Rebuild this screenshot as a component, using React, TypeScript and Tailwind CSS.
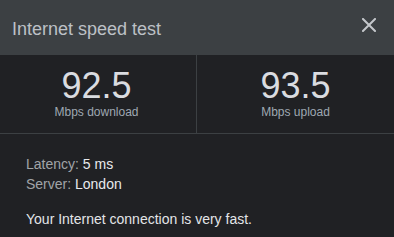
export default function App() {
  return (
    <div
      className="w-[394px] h-[237px] bg-[#202124] overflow-hidden"
      style={{ fontFamily: '"Liberation Sans", Arial, sans-serif' }}
    >
      <div className="h-[54px] bg-[#3c4043] flex items-start justify-between">
        <div className="pl-3 pt-[20px] text-[18px] leading-[18px] text-[#bdc1c6]">
          Internet speed test
        </div>
        <svg width="14" height="14" viewBox="0 0 14 14" className="mt-[18px] mr-[18px]">
          <path d="M1 1L13 13M13 1L1 13" stroke="#c4c7cb" strokeWidth="2" strokeLinecap="square" />
        </svg>
      </div>
      <div className="grid grid-cols-2 border-t border-b border-[#3c4043]">
        <div className="border-r border-[#3c4043] flex flex-col items-center pt-[13px] pb-[15px] pr-[3px]">
          <div className="text-[36px] leading-[36px] text-[#dadce0]">92.5</div>
          <div className="mt-[2px] text-[12px] leading-[12px] text-[#9fa8b2]">Mbps download</div>
        </div>
        <div className="flex flex-col items-center pt-[13px] pb-[15px]">
          <div className="text-[36px] leading-[36px] text-[#dadce0]">93.5</div>
          <div className="mt-[2px] text-[12px] leading-[12px] text-[#9fa8b2]">Mbps upload</div>
        </div>
      </div>
      <div className="pl-[26px] pt-[20px] text-[14px] leading-[20px]">
        <div>
          <span className="text-[#a0a4a8]">Latency: </span>
          <span className="text-[#e8eaed]">5 ms</span>
        </div>
        <div>
          <span className="text-[#a0a4a8]">Server: </span>
          <span className="text-[#e8eaed]">London</span>
        </div>
        <div className="mt-[15px] text-[#e3e5e8]">Your Internet connection is very fast.</div>
      </div>
    </div>
  );
}
